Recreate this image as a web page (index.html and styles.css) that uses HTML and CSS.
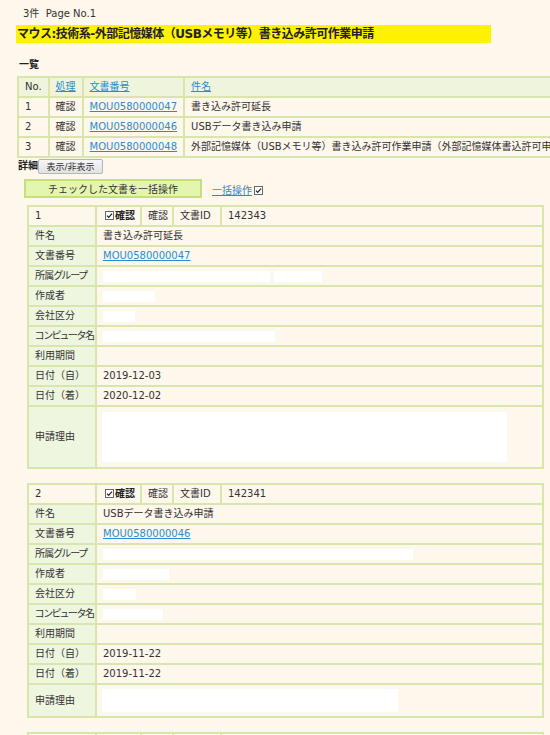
FILE: index.html
```html
<!DOCTYPE html>
<html lang="ja">
<head>
  <meta charset="UTF-8" />
  <title>外部記憶媒体書込許可申請</title>
  <link rel="stylesheet" href="styles.css">
</head>
<body>
<div class="page">
  <p class="count">3件&nbsp; Page No.1</p>
  <h1 class="title">マウス:技術系-外部記憶媒体（USBメモリ等）書き込み許可作業申請</h1>

  <!-- 一覧 -->
  <h2 class="section">一覧</h2>
  <div class="list-wrap">
    <table class="list">
      <tr class="head">
        <th class="c-no">No.</th>
        <th class="c-op"><a href="#">処理</a></th>
        <th class="c-doc"><a href="#">文書番号</a></th>
        <th><a href="#">件名</a></th>
      </tr>
      <tr><td>1</td><td class="center">確認</td><td><a href="#">MOU0580000047</a></td><td>書き込み許可延長</td></tr>
      <tr><td>2</td><td class="center">確認</td><td><a href="#">MOU0580000046</a></td><td>USBデータ書き込み申請</td></tr>
      <tr><td>3</td><td class="center">確認</td><td><a href="#">MOU0580000048</a></td><td>外部記憶媒体（USBメモリ等）書き込み許可作業申請（外部記憶媒体書込許可申請）</td></tr>
    </table>
  </div>

  <!-- 詳細 -->
  <div class="detail-bar">
    <span class="section">詳細</span>
    <button class="toggle">表示/非表示</button>
  </div>
  <div class="bulk">
    <button class="bulk-btn">チェックした文書を一括操作</button>
    <a href="#" class="bulk-link">一括操作</a>
    <svg class="chk" viewBox="0 0 9 9" width="9" height="9"><rect x="0.5" y="0.5" width="8" height="8" fill="#fff" stroke="#666"/><path d="M2 4.6l1.7 1.7L7 2.6" fill="none" stroke="#222" stroke-width="1.2"/></svg>
  </div>

  <table class="card">
    <tr class="card-head">
      <td class="label">1</td>
      <td class="c-check"><svg class="chk" viewBox="0 0 9 9" width="9" height="9"><rect x="0.5" y="0.5" width="8" height="8" fill="#fff" stroke="#666"/><path d="M2 4.6l1.7 1.7L7 2.6" fill="none" stroke="#222" stroke-width="1.2"/></svg><b>確認</b></td>
      <td class="c-stat">確認</td>
      <td class="c-idl">文書ID</td>
      <td>142343</td>
    </tr>
    <tr><td class="label">件名</td><td colspan="4">書き込み許可延長</td></tr>
    <tr><td class="label">文書番号</td><td colspan="4"><a href="#">MOU0580000047</a></td></tr>
    <tr><td class="label narrow">所属グループ</td><td colspan="4"><span class="mask" style="width:167px"></span><span class="mask" style="width:48px"></span></td></tr>
    <tr><td class="label">作成者</td><td colspan="4"><span class="mask" style="width:52px"></span></td></tr>
    <tr><td class="label">会社区分</td><td colspan="4"><span class="mask" style="width:32px"></span></td></tr>
    <tr><td class="label narrow">コンピュータ名</td><td colspan="4"><span class="mask" style="width:172px"></span></td></tr>
    <tr><td class="label">利用期間</td><td colspan="4"></td></tr>
    <tr><td class="label">日付（自）</td><td colspan="4">2019-12-03</td></tr>
    <tr><td class="label">日付（着）</td><td colspan="4">2020-12-02</td></tr>
    <tr class="reason"><td class="label">申請理由</td><td colspan="4"><div class="reason-box" style="width:405px;height:50px"></div></td></tr>
  </table>

  <table class="card">
    <tr class="card-head">
      <td class="label">2</td>
      <td class="c-check"><svg class="chk" viewBox="0 0 9 9" width="9" height="9"><rect x="0.5" y="0.5" width="8" height="8" fill="#fff" stroke="#666"/><path d="M2 4.6l1.7 1.7L7 2.6" fill="none" stroke="#222" stroke-width="1.2"/></svg><b>確認</b></td>
      <td class="c-stat">確認</td>
      <td class="c-idl">文書ID</td>
      <td>142341</td>
    </tr>
    <tr><td class="label">件名</td><td colspan="4">USBデータ書き込み申請</td></tr>
    <tr><td class="label">文書番号</td><td colspan="4"><a href="#">MOU0580000046</a></td></tr>
    <tr><td class="label narrow">所属グループ</td><td colspan="4"><span class="mask" style="width:310px"></span></td></tr>
    <tr><td class="label">作成者</td><td colspan="4"><span class="mask" style="width:66px"></span></td></tr>
    <tr><td class="label">会社区分</td><td colspan="4"><span class="mask" style="width:33px"></span></td></tr>
    <tr><td class="label narrow">コンピュータ名</td><td colspan="4"><span class="mask" style="width:60px"></span></td></tr>
    <tr><td class="label">利用期間</td><td colspan="4"></td></tr>
    <tr><td class="label">日付（自）</td><td colspan="4">2019-11-22</td></tr>
    <tr><td class="label">日付（着）</td><td colspan="4">2019-11-22</td></tr>
    <tr class="reason short"><td class="label">申請理由</td><td colspan="4"><div class="reason-box" style="width:296px;height:23px"></div></td></tr>
  </table>

  <table class="card">
    <tr class="card-head">
      <td class="label">3</td>
      <td class="c-check"><svg class="chk" viewBox="0 0 9 9" width="9" height="9"><rect x="0.5" y="0.5" width="8" height="8" fill="#fff" stroke="#666"/><path d="M2 4.6l1.7 1.7L7 2.6" fill="none" stroke="#222" stroke-width="1.2"/></svg><b>確認</b></td>
      <td class="c-stat">確認</td>
      <td class="c-idl">文書ID</td>
      <td>142344</td>
    </tr>
  </table>
</div>
</body>
</html>
```

FILE: styles.css
```css
* { box-sizing: border-box; }

html, body {
  margin: 0;
  background: #fdf7ec;
}

body {
  font-family: "DejaVu Sans", "Noto Sans CJK JP", sans-serif;
  font-size: 10px;
  color: #333;
  overflow: hidden;
}

a {
  color: #2a8ccc;
  text-decoration: underline;
}

.page {
  padding: 7px 0 0 16px;
}

.count {
  margin: 0;
  padding-left: 7px;
  line-height: 14px;
}

.title {
  width: 475px;
  margin: 4px 0 0;
  padding-left: 1px;
  background: #fff200;
  font-size: 12px;
  line-height: 18px;
  font-weight: bold;
  color: #222;
  white-space: nowrap;
  letter-spacing: -0.5px;
}

.section {
  font-size: 10px;
  font-weight: bold;
  line-height: 14px;
  color: #222;
}

h2.section {
  margin: 15px 0 0 3px;
}

/* 一覧 table */
.list-wrap {
  margin: 4px 0 0 1px;
  overflow: hidden;
}

.list {
  border-collapse: collapse;
  white-space: nowrap;
}

.list th, .list td {
  border: 2px solid #d8e5ac;
  padding: 0 6px;
  line-height: 18px;
  text-align: left;
  font-weight: normal;
}

.list .head th {
  background: #eef5dc;
}

.list .c-no { width: 31px; }
.list .c-op { width: 34px; }
.list .c-doc { width: 102px; }
.list .center { text-align: center; }

/* 詳細 */
.detail-bar {
  display: flex;
  align-items: center;
  margin-left: 2px;
  height: 16px;
}

.toggle {
  width: 65px;
  height: 15px;
  padding: 0;
  margin: 0;
  font-family: inherit;
  font-size: 9px;
  color: #333;
  background: linear-gradient(#f6f6f6, #e2e2e2);
  border: 1px solid #b5b5b5;
  border-radius: 2px;
}

.bulk {
  display: flex;
  align-items: flex-end;
  margin: 5px 0 0 8px;
}

.bulk-btn {
  width: 178px;
  height: 19px;
  padding: 0;
  font-family: inherit;
  font-size: 10px;
  color: #333;
  background: #e4f5b0;
  border: 2px solid #c3e07c;
}

.bulk-link {
  margin: 0 2px 0 10px;
  line-height: 14px;
}

.bulk .chk {
  margin-bottom: 3px;
}

/* 詳細カード */
.card {
  width: 517px;
  margin: 7px 0 14px 11px;
  border-collapse: collapse;
  table-layout: fixed;
}

.card td {
  border: 2px solid #d8e5ac;
  padding: 0 6px;
  line-height: 18px;
  white-space: nowrap;
  overflow: hidden;
}

.card td.label {
  width: 68px;
  background: #eff6df;
}

.card td.narrow {
  padding: 0 0 0 6px;
  font-feature-settings: "palt";
  letter-spacing: -0.8px;
}

.card-head td.label {
  background: transparent;
}

.card .c-check { width: 45px; padding-left: 8px; }
.card .c-stat { width: 32px; }
.card .c-idl { width: 48px; }

.card-head b {
  color: #222;
}

.chk {
  vertical-align: -1px;
  margin-right: 1px;
}

.mask {
  display: inline-block;
  height: 11px;
  margin-right: 4px;
  background: #fff;
  vertical-align: middle;
}

.reason td {
  padding-top: 5px;
  padding-bottom: 5px;
}

.reason.short td {
  padding-top: 4px;
  padding-bottom: 4px;
}

.reason .reason-box {
  background: #fff;
  margin-left: -1px;
}
```
